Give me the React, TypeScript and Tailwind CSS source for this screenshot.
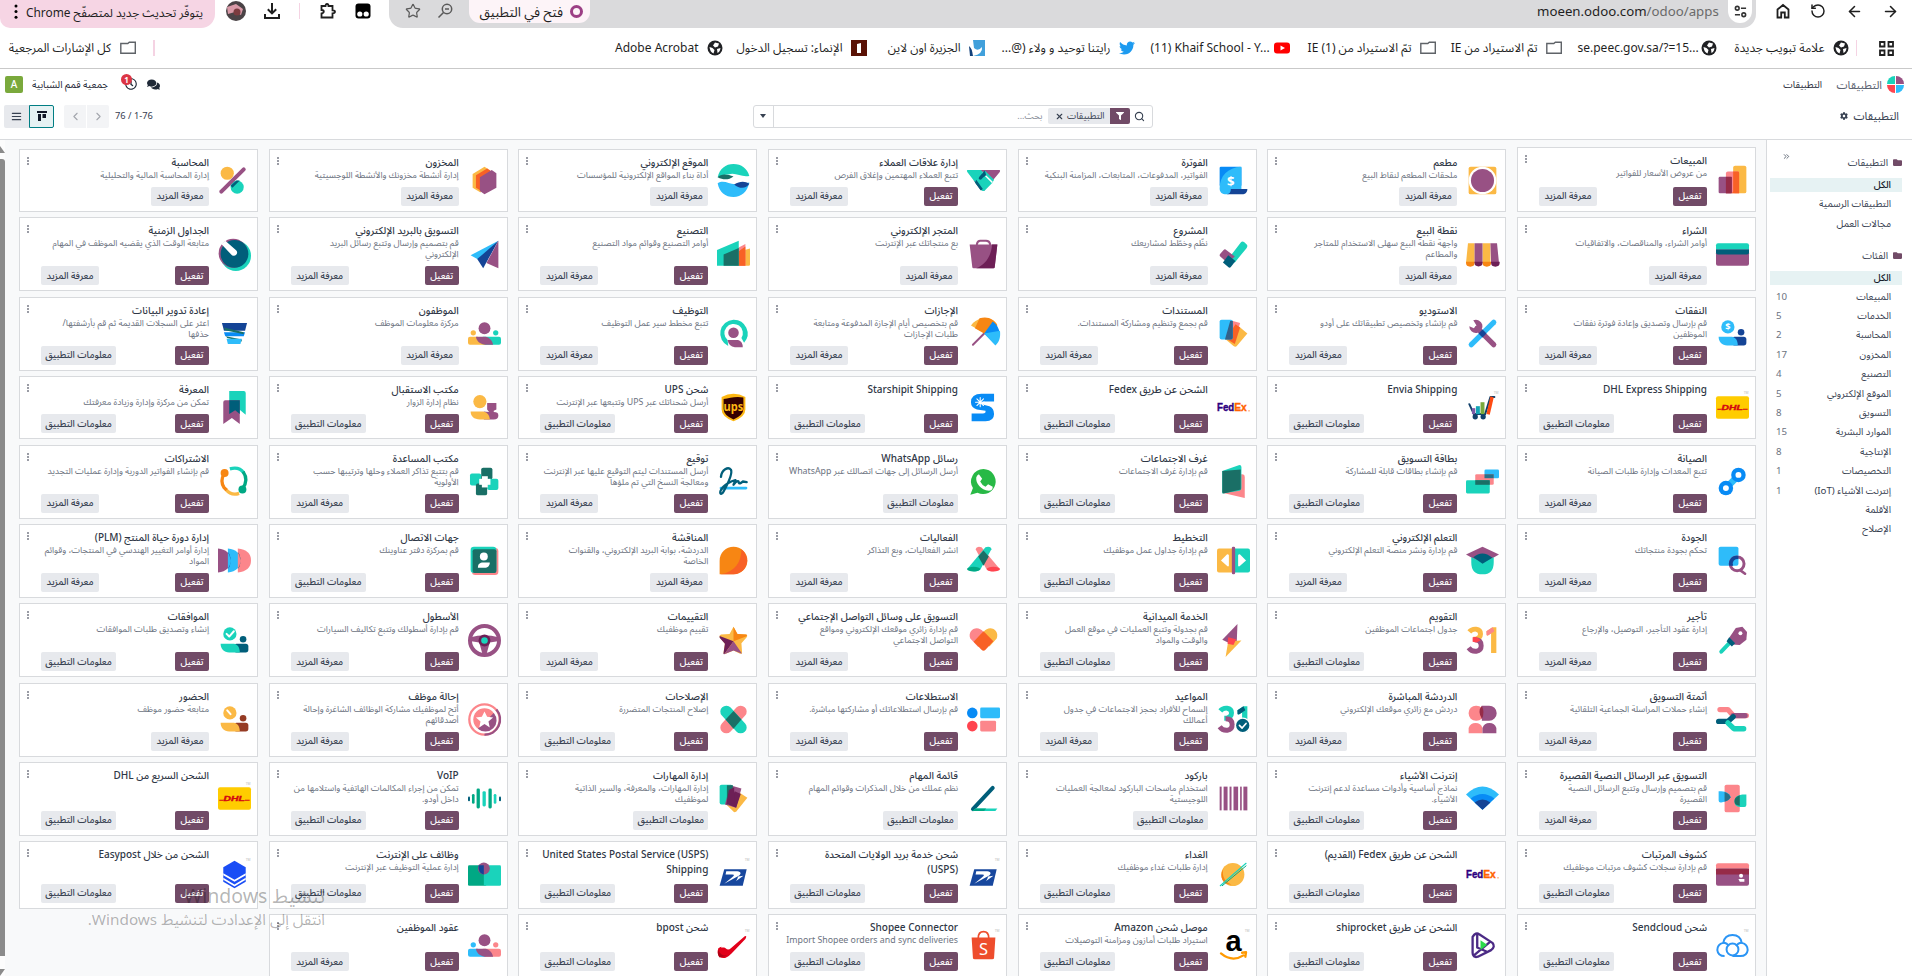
import type { ReactNode } from "react";
import { ArrowLeft, ArrowRight, RotateCcw, Search, Star, X, ChevronLeft, ChevronRight, ChevronsRight, AlignJustify } from "lucide-react";
import { FaComments, FaFilter, FaCog, FaTwitter, FaFolder, FaRegClock } from "react-icons/fa";

const P = "#985184", T = "#1ad3bb", D = "#005e7a", Y = "#fbb945", S = "#fc868b", B = "#2ebcfa", M = "#088bf5", N = "#144496";
const G = "#1a6f66", O = "#f86126", K = "#f78613", W = "#ffffff", V = "#6d1f56", R = "#ff444f", E = "#00a884";

const p = (fill: string, d: string) => <path fill={fill} d={d} />;
const c = (fill: string, cx: number, cy: number, r: number) => <circle fill={fill} cx={cx} cy={cy} r={r} />;
const r = (fill: string, x: number, y: number, w: number, h: number, rx = 0) => <rect fill={fill} x={x} y={y} width={w} height={h} rx={rx} />;
const l = (stroke: string, w: number, d: string) => <path fill="none" stroke={stroke} strokeWidth={w} strokeLinecap="round" strokeLinejoin="round" d={d} />;
const tm = <text x="42" y="4" fontSize="5" fill="#bbb" fontFamily="Noto Sans">TM</text>;

const dhl = <>{tm}{r("#ffcc00", 0, 8, 50, 34, 3)}{p("#d40511", "M2 27h7l-1 1.500H2zM41 27h7v1.500h-8z")}<text x="8.500" y="28.500" fontSize="9.500" fontWeight="900" fontStyle="italic" fill="#d40511" stroke="#d40511" strokeWidth=".5" fontFamily="Liberation Sans" textLength="32" lengthAdjust="spacingAndGlyphs">DHL</text></>;
const fedex = <><text x="0" y="31" fontSize="17" fontWeight="900" fill="#2d0080" fontFamily="Liberation Sans" textLength="26" lengthAdjust="spacingAndGlyphs" stroke="#2d0080" strokeWidth=".6">Fed</text><text x="26" y="31" fontSize="17" fontWeight="900" fill="#ff6200" fontFamily="Liberation Sans" textLength="19" lengthAdjust="spacingAndGlyphs" stroke="#ff6200" strokeWidth=".6">Ex</text>{c("#ff6200", 48.5, 30, 1)}</>;
const usps = <>{tm}{p("#17479e", "M11 17h34l-6 25H4z")}{p(W, "M14 20h14c8 0 10 3 5 7L11 39l12-10c4-3 3-4-1-4H13zM32 28l8-1-11 8 2-4z")}</>;
const people = (a: string, b: string) => <>{c(P, 25, 17, 9)}{c(a, 8, 24, 4)}{c(b, 42, 24, 4)}{r(b, 20, 30, 30, 12, 3)}{p(a, "M3 30h12c2 6 8 10 12 12H3a3 3 0 0 1-3-3v-6a3 3 0 0 1 3-3z")}{p(P, "M12 30h15c7 2 10 7 11 12H26c-8-1-13-5-14-12z")}</>;
const desk = (a: string, b: string, mark: ReactNode) => <>{c(a, 18, 15, 10)}{mark}{c(b, 38, 23, 5)}{r(b, 24, 30, 22, 13, 4)}{p(a, "M4 30h20c6 1 9 6 9 13H17C9 43 4 38 4 30z")}</>;
const thirtyOne = (a: string, b: string, e: string) => <><path fill="none" stroke={a} strokeWidth="7.500" d="M5 12c5-6 17-6 17 3 0 6-5 8-11 8" /><path fill="none" stroke={b} strokeWidth="7.500" d="M13 24c7 0 10 3 10 9 0 10-13 11-19 3" />{p(e, "M31 11l9-6h6v39h-8V14l-6 4z")}</>;

const I: Record<string, ReactNode> = {
  sales: <>{r(Y, 26, 4, 20, 42, 3)}{p(S, "M18 13h15a2 2 0 0 1 2 2v31H15V16a3 3 0 0 1 3-3z")}{r(P, 4, 21, 20, 25, 2)}{r("#962b48", 15, 21, 9, 25)}{p(O, "M26 13h7a2 2 0 0 1 2 2v31H24l2-3z")}</>,
  restaurant: <>{r(Y, 4, 4, 42, 42, 3)}{c(W, 25, 25, 21)}{c(P, 25, 25, 17.5)}</>,
  invoice: <>{r(M, 4, 4, 33, 30, 2)}{p(B, "M37 4v36H22c0 4-4 6-8 6-6 0-10-3-10-9C4 18 16 5 37 4z")}{p(N, "M21 38h25c0 5-3 8-8 8H15c4-1 6-3 6-8z")}<text x="21" y="33" fontSize="20" fontWeight="700" textAnchor="middle" fill={W} fontFamily="Noto Sans">$</text></>,
  crm: <>{p(P, "M20 9h29c2 0 1 3 0 4L39 25zM10 25l10 14 7 2-10-18z")}{p(T, "M1 9h20l18 18-2 3-10 10q-3 2-6-1L1 13C0 11-1 9 1 9zM41 24L27 10l-4 4 15 15z")}{p(D, "M27 10l-8 9q-3 4 1 5 2 0 4-3l5-4zM14 24l10 14-3 2-9-12z")}</>,
  website: <>{p(T, "M1 20C4 7 13 0 25 0s21 7 24 18c-12 3-20-6-32-2-6 0-10 2-16 4z")}{p(G, "M1 20c5-6 15-5 24-1-8 6-16 5-24 1z")}{p(B, "M1 29c11-6 19 4 31 1 6 0 11-1 17-2-3 14-12 22-24 22S3 42 1 29z")}{p(N, "M49 30c-7-5-15-4-23 1 8 7 18 7 23-1z")}</>,
  stock: <>{p(Y, "M7 15L25 4l6 4-12 35L7 36z")}{p(O, "M12 17l17-10 5 3-10 33-12-7z")}{p(P, "M25 46L18 41V20l18-11 7 5v22z")}</>,
  account: <>{c(Y, 14, 14, 10)}{c(T, 29, 35, 10)}{l(P, 6, "M5 42L39 8")}{p("#005e7a", "M19 33l9-8h5l-11 11z")}</>,
  purchase: <>{p(T, "M3 8h44a3 3 0 0 1 3 3v6H0v-6a3 3 0 0 1 3-3z")}{r(P, 0, 20, 50, 22, 3)}{p(D, "M0 17h50v5a3 3 0 0 1-3 3H3a3 3 0 0 1-3-3z")}</>,
  pos: <>{p(Y, "M3 8h10v30H0zM25 8h12v30H25z")}{p(P, "M13 8h12v30H13zM37 8h10l3 30H38z")}{p(K, "M0 36h13v2a6 5 0 0 1-13 0zM25 36h13v2a6 5 0 0 1-13 0z")}{p(V, "M13 36h12v2a6 5 0 0 1-12 0zM38 36h13v2a6 5 0 0 1-13 0z")}</>,
  project: <>{p(T, "M16 33L36 7q2-3 5-1l4 4q2 2 0 5L27 37z")}{p(P, "M5 24l5-6q2-2 4 0l13 10-11 10L5 28q-2-2 0-4z")}{p(D, "M17 26l11 9-7 9q-2 2-4 0l-8-7z")}</>,
  shop: <>{l(P, 3, "M15 14V9q1-5 5-5h9q5 0 6 5v5")}{p(P, "M4 10h42l-4 34q0 2-2 2H10q-2 0-2-2z")}{p(V, "M38 10h8l-4 34q0 2-2 2H14c15-6 23-20 24-36z")}</>,
  mrp: <>{p(Y, "M35 20l15-4v24q0 2-2 2H32z")}{p(S, "M30 16l13-7v33H26z")}{p(T, "M0 18L33 4v38H0z")}{p(O, "M33 20l10-7v29H33z")}{p(G, "M10 25l23-10v27H10z")}</>,
  email: <>{p(B, "M4 26L46 4 18 34z")}{p(N, "M46 4L23 46l-9-14z")}{p(P, "M46 4v42L28 38z")}</>,
  timesheet: <>{c(T, 27, 27, 23)}{c(P, 23, 23, 22)}{c(D, 25, 24, 21)}{p(W, "M5 9l6-5 16 14a5 5 0 1 1-7 7z")}</>,
  expense: desk(B, N, <text x="18" y="20" fontSize="14" fontWeight="700" textAnchor="middle" fill={W} fontFamily="Noto Sans">$</text>),
  studio: <>{l(B, 8, "M42 8L8 42")}{l(P, 8, "M17 17l25 25")}{p(P, "M11 5a10 10 0 1 1-6 9l7 3 4-4z")}{p(N, "M25 19l6 6-6 6-6-6z")}</>,
  documents: <>{p(Y, "M28 10l18 15-16 19q-2 2-5 0L12 33z")}{p(S, "M20 5l15 4-7 24-14-3z")}{p(O, "M28 11l7 5-8 25-13-8z")}{r(B, 4, 4, 20, 30, 3)}{p("#33618a", "M20 6h4v25q0 3-3 3h-9z")}</>,
  timeoff: <>{l(P, 3, "M9 42l17-17")}{p(Y, "M6 13C16-1 37-3 46 12L25 24z")}{p(K, "M19 2c12-4 22 1 27 11L26 25 12 17z")}{p(M, "M26 25L39 7c13 9 13 25 4 35z")}{p(B, "M26 25l24-4c1 10-1 17-7 22z")}</>,
  recruit: <>{p(T, "M25 4a21 21 0 0 0-8 40l-1-9a14 14 0 1 1 21-3l4 7A21 21 0 0 0 25 4z")}{c(P, 25, 24, 8)}{p(P, "M16 35h16q7 2 7 11H27q-9-1-11-11z")}</>,
  employees: people(Y, T),
  recycle: <>{p(N, "M6 9h38l-3 12H9z")}{p(M, "M9 23h32l-2 6H11z")}{p(G, "M9 16l30 7v3l-28-6zM12 29l24 5v3l-22-5z")}{p(B, "M13 33h23l-2 8H15z")}</>,
  dhl, fedex, usps,
  envia: <>{tm}{l("#12406b", 3, "M5 20l7 15h17l8-26h6")}{c("#12406b", 14, 39, 4)}{c("#12406b", 26, 39, 4)}{r("#7b5aa6", 9, 26, 5, 9)}{r("#12a5b5", 15, 23, 6, 12)}{r("#7aa93c", 22, 17, 6, 18)}{p("#ff4b13", "M31 35l6-27 5 2-6 26z")}</>,
  starship: <>{p(M, "M41 4v12H25q-4 1-3 4l12 3q7 3 7 12 0 11-13 11H7V34h17q5 0 4-4l-13-2Q6 25 6 17 6 4 22 4z")}{l(W, 1.6, "M20 10v14M13 17h14M15 12l10 10M25 12L15 22")}</>,
  ups: <>{p("#fdb813", "M7 9q18-10 36 0v19q0 11-18 18Q7 39 7 28z")}{p("#330000", "M10 12c9-1 19-5 30-2v17q0 10-15 16-15-6-15-16z")}<text x="10" y="31" fontSize="19" fontWeight="700" fill="#fdb813" fontFamily="Noto Sans" textLength="30" lengthAdjust="spacingAndGlyphs">ups</text></>,
  frontdesk: <>{c(Y, 18, 16, 10)}{p(P, "M29 18h14v10l-4 2v2q7 0 7 5 0 6-7 6H24V31l8 1-3-4z")}{p(Y, "M4 31h19c7 1 10 7 10 12H18C9 43 4 38 4 31z")}</>,
  knowledge: <>{p(T, "M17 0h22q3 0 3 3v33l-11-9-14 9z")}{p(P, "M11 14h22v36l-12-9-13 9V17q0-3 3-3z")}{p(D, "M17 14h16v21l-7-6-9 6z")}</>,
  maintenance: <>{l(B, 10, "M35 15L15 35")}{c(M, 34, 15, 11)}{c(M, 15, 35, 11)}{c(W, 34, 15, 4.5)}{c(W, 15, 35, 4.5)}</>,
  card: <>{r(B, 28, 7, 22, 13, 2)}{r(S, 14, 14, 28, 16, 2)}{r(T, 0, 23, 36, 20, 2)}{r("#28708a", 28, 14, 14, 6)}{r(G, 14, 23, 22, 7)}</>,
  rooms: <>{p(S, "M17 14h21q4 0 4 4v32L8 42z")}{p(T, "M8 9L34 0q3 0 3 3v32q0 3-3 4L8 43z")}{p(G, "M8 9l28-2v30L10 43q-2 0-2-3z")}</>,
  whatsapp: <>{p("#28b946", "M25 6a19 19 0 1 1-9 36L5 45l4-10A19 19 0 0 1 25 6z")}{p(W, "M18 14l5 7-3 4q3 6 8 8l4-4 7 4q0 6-6 6C21 38 13 28 14 19q1-4 4-5z")}</>,
  sign: <>{r(B, 4, 33, 42, 4, 2)}{l(D, 3.5, "M6 18C7 7 17 2 21 7c3 5-5 22-11 33-3 6-7 4-4-2 4-9 17-14 22-15l-3 7c4-5 8-8 8-3 1 2 4 0 6-2l6 1")}</>,
  helpdesk: <>{r(G, 20, 4, 17, 18, 3)}{r(T, 3, 13, 17, 18, 3)}{r(T, 29, 21, 17, 17, 3)}{r(G, 12, 28, 17, 18, 3)}{r(G, 20, 17, 10, 16)}{r(W, 21, 17, 9, 17)}{r(W, 17, 21, 17, 9)}</>,
  subscription: <><g fill="none" strokeWidth="5"><path stroke={T} d="M18 6q14-4 21 6" /><path stroke={E} d="M38 10q9 13-1 26" /><path stroke={Y} d="M12 37q8 10 20 6" /><path stroke={K} d="M9 14q-6 10 0 20l4 4" /></g>{c(K, 10, 12, 6)}{c(E, 37, 37, 6)}</>,
  quality: <>{r(B, 4, 4, 30, 29, 3)}<circle cx="32" cy="30" r="10.500" fill="none" stroke={P} strokeWidth="4.500" />{l(P, 4, "M37 40l7 5")}{p(N, "M20 33a12 12 0 0 1 14-15v5a7 7 0 0 0-8 10z")}</>,
  elearning: <>{p(P, "M25 4l25 12-25 14L0 16z")}{p(T, "M8 20q17 10 34 0v8q0 18-17 18T8 28z")}{p(D, "M11 20q14-12 29 1L25 30z")}</>,
  planning: <>{r(Y, 0, 7, 26, 36, 3)}{r(T, 24, 7, 26, 36, 3)}{r(P, 22.5, 4, 5, 42, 2)}{p(W, "M18 17v16q-1 2-3 0l-9-8 9-9q2-1 3 1zM32 17v16q1 2 3 0l9-8-9-9q-2-1-3 1z")}</>,
  events: <>{p(S, "M13 8q1-4 5-4l4 1 27 32q-11 8-19 2z")}{p(T, "M37 8q0-4-5-4l-4 1L1 37q10 8 19 2z")}{p(G, "M25 10l8 9-8 14-8-14z")}<ellipse cx="10" cy="38" rx="10" ry="3.500" fill={E} /><ellipse cx="40" cy="38" rx="10" ry="3.500" fill={R} /></>,
  discuss: <>{p(K, "M4 46V25a21 21 0 1 1 21 21z")}{p(O, "M37 8c0 19-10 35-32 38h20A21 21 0 0 0 37 8z")}</>,
  contacts: <>{r(S, 6, 6, 40, 41, 5)}{r(T, 4, 4, 39, 40, 5)}{r(G, 7, 8, 36, 36, 3)}{c(W, 24, 19, 6)}{p(W, "M15 36c0-6 3-8 8-8h10c0 5-3 8-8 8z")}</>,
  plm: <>{p(P, "M0 7q19 2 19 18T0 43z")}{p(B, "M15 7q19 2 19 18T15 43z")}{p(S, "M30 7q20 2 20 18T30 43z")}{p(N, "M15 12q8 13 0 26 4-4 4-13t-4-13z")}{p(D, "M30 12q8 13 0 26 4-4 4-13t-4-13z")}</>,
  rental: <>{l(T, 6, "M8 42l18-19")}{p(P, "M30 6l10-2 7 8-1 12-10 8-12-1-4-10z")}{p(D, "M20 20l9 9-5 5-8-8z")}{c(W, 37, 14, 3)}</>,
  calendar: <>{thirtyOne(Y, P, Y)}{p(R, "M10 20q8-2 12 5l-6 3-6-1z")}{p(S, "M31 11l9-6 3 6-9 6-3 0z")}</>,
  field: <>{p(P, "M31 0L8 24l15 7 7-5z")}{p(Y, "M13 50l4-24 20-1z")}{p(R, "M17 20l12 3-4 9-9-2z")}</>,
  social: <>{p(S, "M25 12C16 0 0 9 5 22l12 13 15-15z")}{p(Y, "M25 12c9-12 25-3 20 10L34 34 18 18z")}{p(O, "M25 11l15 15-12 13q-3 3-6 0L10 27z")}</>,
  appraisal: <>{p(Y, "M25 4l6 11 13 1q3 1 1 4l-8 9 1 14q0 3-3 2l-10-5-12 5q-3 1-3-2l2-13-8-10q-1-3 2-4l13-1z")}{p(K, "M25 4l6 11 13 1q3 1 0 3L25 26z")}{p(V, "M4 18l21 8-14 20q-2 0-1-3l2-13-8-9z")}{p(P, "M25 26l13 19-13-5-14 6z")}</>,
  fleet: <><circle cx="25" cy="25" r="22" fill="none" stroke={P} strokeWidth="6" />{p(P, "M4 20q21-6 42 0l-1 6-12 2-5 18h-6l-5-18-12-2z")}{c(V, 25, 25, 9)}{c(T, 25, 25, 5)}</>,
  approvals: desk(T, D, l(W, 3, "M13 15l4 4 7-8")),
  automation: <>{l(S, 8, "M6 10h12l8 9h20")}{l(P, 8, "M26 19h18")}{l(D, 8, "M4 28h14l8-7")}{l(T, 8, "M18 30l9 9h15")}</>,
  livechat: <>{r(S, 4, 4, 23, 23, 11)}{p(P, "M24 4h11a11 11 0 0 1 0 23H24z")}{p("#962b48", "M24 4q-7 8 0 20 5-10 0-20z")}{p(S, "M4 46V38a11 11 0 0 1 21 0v8z")}{p(P, "M25 46v-8a11 11 0 0 1 21 0v8z")}</>,
  appointment: <>{thirtyOne(T, P, T)}{p(D, "M31 11l9-6 3 6-9 6-3 0z")}{c(W, 39, 34, 12)}{c(D, 39, 34, 10)}{l(W, 2.5, "M34 34l4 4 6-7")}</>,
  survey: <>{c(M, 8, 15, 8)}{r(B, 20, 7, 30, 16, 2)}{c(R, 8, 35, 8)}{r(S, 20, 27, 24, 16, 2)}</>,
  repair: <>{l(S, 18, "M36 13L14 37")}{l(T, 18, "M14 13l22 24")}{p(G, "M25 12l12 13-12 14-12-14z")}</>,
  referral: <><circle cx="25" cy="25" r="23" fill="none" stroke={S} strokeWidth="3.500" /><path d="M25 48A23 23 0 0 0 43 10" fill="none" stroke={P} strokeWidth="3.500" />{c(S, 25, 25, 17)}{p(P, "M39 15a17 17 0 0 1-24 24z")}{p(W, "M25 13l4 8 9 1-7 6 2 9-8-5-8 5 2-9-7-6 9-1z")}</>,
  attendance: desk(Y, "#953b24", l(W, 3, "M14 11l5 6")),
  sms: <>{r(S, 13, 4, 23, 42, 3)}{p(B, "M4 14h4q12 1 14 8-1 7-14 9H7q-3 0-3-3z")}{p(T, "M46 19h-6q-12 1-12 10 0 8 8 9h7q3 0 3-3z")}{p("#28708a", "M13 15q8 3 9 8-2 5-9 7z")}{p(G, "M36 20q-9 3-8 10 0 5 8 6z")}</>,
  iot: <>{p(B, "M0 19Q25-5 50 19L25 42z")}{p(M, "M7 25q18-14 36 0L25 42z")}{p(N, "M13 31q12-9 24 0L25 42z")}</>,
  barcode: <>{r(P, 4, 7, 3, 36)}{r(P, 10, 7, 6, 36)}{r(P, 19, 7, 3, 36)}{r(P, 25, 7, 7, 36)}{r(P, 35, 7, 2.5, 36)}{r(P, 40, 7, 6, 36)}</>,
  todo: <>{l(D, 6, "M39 9L9 41")}{p(T, "M13 40h33l-3 4H8z")}{p(E, "M13 40h16l-3 4H8z")}</>,
  skills: <>{p(Y, "M28 12l18 12-17 21-3 1-12-12z")}{r(T, 4, 4, 20, 30, 3)}{p(P, "M20 5l17 5-8 29-17-5z")}{p(V, "M27 14l9 4-7 21-12-5z")}{p(G, "M15 5h9v26l-9 3z")}{p(V, "M18 12l8-4v24l-12 2z")}</>,
  voip: <>{r(D, 0, 22, 3, 7, 1.5)}{r(E, 6, 18, 4, 15, 2)}{r(E, 13, 10, 5, 30, 2)}{r(T, 22, 14, 5, 23, 2)}{r(E, 31, 10, 5, 30, 2)}{r(T, 39, 18, 4, 15, 2)}{r(D, 47, 22, 3, 7, 1.5)}</>,
  payroll: <>{r(P, 0, 16, 50, 26, 3)}{p(S, "M3 8h44a3 3 0 0 1 3 3v5H0v-5a3 3 0 0 1 3-3z")}{r("#962b48", 0, 16, 50, 9)}{c(W, 38, 27, 3)}{p(W, "M34 32h9v4h-7z")}</>,
  lunch: <>{c(Y, 24, 25, 17.5)}{p(K, "M12 12C5 22 10 36 22 40 12 42 5 33 7 22z")}{l(T, 1.8, "M5 42L44 8")}{l(E, 1.5, "M8 42L44 12")}</>,
  webjobs: <>{r(E, 0, 11, 28, 31, 2)}{r(T, 24, 11, 26, 31, 2)}{c(P, 24, 16, 9)}{p(N, "M16 11h8v14q-9-2-8-14z")}</>,
  easypost: <>{tm}{p("#1a4df5", "M25 4l17 10v22L25 46 8 36V14z")}{p(W, "M8 23l17 10 17-10v3L25 36 8 26zM8 30l17 10 17-10v3L25 43 8 33z")}</>,
  sendcloud: <>{tm}<g fill="none" stroke={"#2b95f5"} strokeWidth="3"><path d="M13 41q-10 0-11-9 0-9 9-11Q13 9 25 9t14 12q9 2 9 11-1 9-11 9H25" /><circle cx="25" cy="31" r="9" /><path d="M11 21q6 0 8 5M39 21q-6 0-8 5" /></g></>,
  shiprocket: <>{l("#4b2a85", 3.5, "M10 12v24q0 8 8 6l20-10q7-5 2-11L20 8q-5-4-10 4M17 8v20l14 6M12 40l24-20")}{p("#2bdc4a", "M22 17l10 7-10 8z")}</>,
  amazon: <>{tm}<text x="25" y="34" fontSize="44" fontWeight="700" textAnchor="middle" fill="#000" fontFamily="Liberation Sans">a</text>{l("#ff9900", 3.5, "M6 37q17 14 34 3M38 36l6-1-1 7")}</>,
  shopee: <>{tm}{p("#ee4d2d", "M7 13h36l-2 31q0 2-3 2H12q-3 0-3-2z")}{l("#ee4d2d", 2.5, "M17 14q0-10 8-10t8 10")}<text x="25" y="39" fontSize="25" textAnchor="middle" fill={W} fontFamily="Noto Sans">S</text></>,
  bpost: <>{tm}{p("#e2001a", "M2 29q7-4 11 0 4 4 8 0L42 11q4-2 1 4L22 37Q11 48 4 42-1 38 2 29z")}{p("#b00014", "M2 32q4 10 14 8L4 43q-4-3-2-11z")}{p(W, "M6 28q7-12 20-14-8 5-12 14z")}</>,
  contracts: people(B, S),
};

type App = [icon: string, title: string, desc: string, buttons: "am" | "ai" | "m" | "i"];

const apps: App[] = [
  ["sales", "المبيعات", "من عروض الأسعار للفواتير", "am"],
  ["restaurant", "مطعم", "ملحقات المطعم لنقاط البيع", "m"],
  ["invoice", "الفوترة", "الفواتير، المدفوعات، المتابعات، المزامنة البنكية", "m"],
  ["crm", "إدارة علاقات العملاء", "تتبع العملاء المهتمين وإغلاق الفرص", "am"],
  ["website", "الموقع الإلكتروني", "أداة بناء المواقع الإلكترونية للمؤسسات", "m"],
  ["stock", "المخزون", "إدارة أنشطة مخزونك والأنشطة اللوجسيتية", "m"],
  ["account", "المحاسبة", "إدارة المحاسبة المالية والتحليلية", "m"],
  ["purchase", "الشراء", "أوامر الشراء، والمناقصات، والاتفاقيات", "m"],
  ["pos", "نقطة البيع", "واجهة نقطة البيع سهلى الاستخدام للمتاجر\nوالمطاعم", "m"],
  ["project", "المشروع", "نظّم وخطّط لمشاريعك", "m"],
  ["shop", "المتجر الإلكتروني", "بع منتجاتك عبر الإنترنت", "m"],
  ["mrp", "التصنيع", "أوامر التصنيع وقوائم مواد التصنيع", "am"],
  ["email", "التسويق بالبريد الإلكتروني", "قم بتصميم وإرسال وتتبع رسائل البريد\nالإلكتروني", "am"],
  ["timesheet", "الجداول الزمنية", "متابعة الوقت الذي يقضيه الموظف في المهام", "am"],
  ["expense", "النفقات", "قم بإرسال وتصديق وإعادة فوترة نفقات\nالموظفين", "am"],
  ["studio", "الاستوديو", "قم بإنشاء وتخصيص تطبيقاتك على أودو", "am"],
  ["documents", "المستندات", "قم بجمع وتنظيم ومشاركة المستندات.", "am"],
  ["timeoff", "الإجازات", "قم بتخصيص أيام الإجازة المدفوعة ومتابعة\nطلبات الإجازات", "am"],
  ["recruit", "التوظيف", "تتبع مخطط سير عمل التوظيف", "am"],
  ["employees", "الموظفون", "مركزة معلومات الموظف", "m"],
  ["recycle", "إعادة تدوير البيانات", "اعثر على السجلات القديمة ثم قم بأرشفتها/\nحذفها", "ai"],
  ["dhl", "DHL Express Shipping", "", "ai"],
  ["envia", "Envia Shipping", "", "ai"],
  ["fedex", "الشحن عن طريق Fedex", "", "ai"],
  ["starship", "Starshipit Shipping", "", "ai"],
  ["ups", "شحن UPS", "أرسل شحناتك عبر UPS وتتبعها عبر الإنترنت", "ai"],
  ["frontdesk", "مكتب الاستقبال", "نظام إدارة الزوار", "ai"],
  ["knowledge", "المعرفة", "تمكن من مركزة وإدارة وزيادة معرفتك", "ai"],
  ["maintenance", "الصيانة", "تتبع المعدات وإدارة طلبات الصيانة", "am"],
  ["card", "بطاقة التسويق", "قم بإنشاء بطاقات قابلة للمشاركة", "ai"],
  ["rooms", "غرف الاجتماعات", "قم بإدارة غرف الاجتماعات", "ai"],
  ["whatsapp", "رسائل WhatsApp", "أرسل الرسائل إلى جهات اتصالك عبر WhatsApp", "i"],
  ["sign", "توقيع", "أرسل المستندات ليتم التوقيع عليها عبر الإنترنت\nومعالجة النسخ التي تم ملؤها", "am"],
  ["helpdesk", "مكتب المساعدة", "قم بتتبع تذاكر العملاء وحلها وترتيبها حسب\nالأولوية", "am"],
  ["subscription", "الاشتراكات", "قم بإنشاء الفواتير الدورية وإدارة عمليات التجديد", "am"],
  ["quality", "الجودة", "تحكم بجودة منتجاتك", "am"],
  ["elearning", "التعلم الإلكتروني", "قم بإدارة ونشر منصة التعلم الإلكتروني", "am"],
  ["planning", "التخطيط", "قم بإدارة جداول عمل موظفيك", "ai"],
  ["events", "الفعاليات", "انشر الفعاليات، وبع التذاكر", "am"],
  ["discuss", "المناقشة", "الدردشة، بوابة البريد الإلكتروني، والقنوات\nالخاصة", "m"],
  ["contacts", "جهات الاتصال", "قم بمركزة دفتر عناوينك", "ai"],
  ["plm", "إدارة دورة حياة المنتج (PLM)", "إدارة أوامر التغيير الهندسي في المنتجات، وقوائم\nالمواد", "am"],
  ["rental", "تأجير", "إدارة عقود التأجير، التوصيل، والإرجاع", "am"],
  ["calendar", "التقويم", "جدول اجتماعات الموظفين", "ai"],
  ["field", "الخدمة الميدانية", "قم بجدولة وتتبع العمليات في موقع العمل\nوالوقت والمواد", "ai"],
  ["social", "التسويق على وسائل التواصل الإجتماعي", "قم بإدارة زائري موقعك الإلكتروني ومواقع\nالتواصل الاجتماعي", "am"],
  ["appraisal", "التقييمات", "تقييم موظفيك", "am"],
  ["fleet", "الأسطول", "قم بإدارة أسطولك وتتبع تكاليف السيارات", "am"],
  ["approvals", "الموافقات", "إنشاء وتصديق طلبات الموافقات", "ai"],
  ["automation", "أتمتة التسويق", "إنشاء حملات المراسلة الجماعية التلقائية", "am"],
  ["livechat", "الدردشة المباشرة", "دردش مع زائري موقعك الإلكتروني", "am"],
  ["appointment", "المواعيد", "إلسماح للأفراد بحجز الاجتماعات في جدول\nأعمالك", "am"],
  ["survey", "الاستطلاعات", "قم بإرسال استطلاعاتك أو مشاركتها مباشرة.", "am"],
  ["repair", "الإصلاحات", "إصلاح المنتجات المتضررة", "ai"],
  ["referral", "إحالة موظف", "أتح لموظفيك مشاركة الوظائف الشاغرة وإحالة\nأصدقائهم", "am"],
  ["attendance", "الحضور", "متابعة حضور موظف", "m"],
  ["sms", "التسويق عبر الرسائل النصية القصيرة", "قم بتصميم وإرسال وتتبع الرسائل النصية\nالقصيرة", "am"],
  ["iot", "إنترنت الأشياء", "نماذج أساسية وأدوات مساعدة لدعم إنترنت\nالأشياء.", "ai"],
  ["barcode", "باركود", "استخدام ماسحات الباركود لمعالجة العمليات\nاللوجيستية", "i"],
  ["todo", "قائمة المهام", "نظم عملك من خلال المذكرات وقوائم المهام", "i"],
  ["skills", "إدارة المهارات", "إدارة المهارات، والمعرفة، والسير الذاتية\nلموظفيك", "i"],
  ["voip", "VoIP", "تمكن من إجراء المكالمات الهاتفية واستلامها من\nداخل أودو.", "ai"],
  ["dhl", "الشحن السريع من DHL", "", "ai"],
  ["payroll", "كشوف المرتبات", "قم بإدارة سجلات كشوف مرتبات موظفيك", "ai"],
  ["fedex", "الشحن عن طريق Fedex (القديم)", "", "ai"],
  ["lunch", "الغداء", "إدارة طلبات غداء موظفيك", "ai"],
  ["usps", "شحن خدمة بريد الولايات المتحدة\n(USPS)", "", "ai"],
  ["usps", "United States Postal Service (USPS)\nShipping", "", "ai"],
  ["webjobs", "وظائف على الإنترنت", "إدارة عملية التوظيف عبر الإنترنت", "ai"],
  ["easypost", "الشحن من خلال Easypost", "", "ai"],
  ["sendcloud", "شحن Sendcloud", "", "ai"],
  ["shiprocket", "الشحن عن طريق shiprocket", "", "ai"],
  ["amazon", "موصل شحن Amazon", "استيراد طلبات أمازون ومزامنة التوصيلات", "ai"],
  ["shopee", "Shopee Connector", "Import Shopee orders and sync deliveries", "ai"],
  ["bpost", "شحن bpost", "", "ai"],
  ["contracts", "عقود الموظفين", "", "am"],
];

function AppCard({ app: [icon, title, desc, buttons], first }: { app: App; first: boolean }) {
  const secondary = "flex h-[19px] items-center justify-center rounded-[2px] bg-[#e7e9ed] text-[9.3px] font-medium text-[#374151]";
  return (
    <article className={`flex min-h-0 overflow-hidden border border-[#d8dadd] bg-white pr-[6px] ${first ? "-mt-[2px]" : ""}`}>
      <svg viewBox="0 0 50 50" className="h-[33px] w-[33px] shrink-0 self-center overflow-visible [direction:ltr]">{I[icon]}</svg>
      <div className="mr-[9px] flex min-w-0 flex-1 flex-col pt-[5px] pb-[5px]">
        <h3 className="text-[10px] leading-[15px] font-medium whitespace-pre text-[#2f3746]">{title}</h3>
        <p className="text-[8.8px] leading-[11px] whitespace-pre text-[#6b7280]">{desc}</p>
        <div className="mt-auto flex justify-between">
          {buttons[0] === "a" && (
            <button className="flex h-[19px] w-[34px] items-center justify-center rounded-[2px] bg-[#714b67] text-[9.3px] font-medium text-white">تفعيل</button>
          )}
          {buttons.endsWith("m") ? (
            <button className={`${secondary} w-[58px]`}>معرفة المزيد</button>
          ) : (
            <button className={`${secondary} w-[75px]`}>معلومات التطبيق</button>
          )}
        </div>
      </div>
      <div className="flex w-[21px] shrink-0 justify-end pt-[7px] pl-[7px]">
        <svg viewBox="0 0 3 8" className="h-[8px] w-[3px]" fill="#9a9ca5"><path d="M0 0h2v2H0zM0 3h2v2H0zM0 6h2v2H0z" /></svg>
      </div>
    </article>
  );
}

const Globe = () => (
  <svg viewBox="0 0 16 16" className="h-4 w-4"><circle cx="8" cy="8" r="7.500" fill="#202124" /><path d="M8 2.500l4 1-1 3-3 1-2-2zM2.500 7l3 1 2 2-1 3.500Q3 12 2.500 7zM10 9l3.500-1q-.5 4-3 5z" fill="#fff" /></svg>
);
const Folder = () => (
  <svg viewBox="0 0 16 16" className="h-4 w-4" fill="none" stroke="#5f6368" strokeWidth="1.400"><path d="M.8 13.200V3.500h7l1.500-1.300h6v11z" /></svg>
);
const YouTube = () => (
  <svg viewBox="0 0 16 16" className="h-4 w-4"><rect y="2.500" width="16" height="11" rx="3" fill="#f00" /><path d="M6.500 5.500v5L11 8z" fill="#fff" /></svg>
);
const Jazira = () => (
  <svg viewBox="0 0 16 16" className="h-4 w-4"><path d="M4 0h12v16H4q10-2 9-9-4 5-8 1z" fill="#41a0db" /><path d="M0 6q3 2 4 10H1z" fill="#12407a" /></svg>
);
const Inma = () => (
  <svg viewBox="0 0 16 16" className="h-4 w-4"><path fill="#5a1205" d="M0 0h16v16H0z" /><path fill="#fff" d="M6 4l4-1v10H6z" /></svg>
);

const bookmarks: [ReactNode, string, string][] = [
  [<Globe />, "علامة تبويب جديدة", "w-[92px]"],
  [<Globe />, "se.peec.gov.sa/?=15...", "w-[115px]"],
  [<Folder />, "تمّ الاستيراد من IE", "w-[86px]"],
  [<Folder />, "تمّ الاستيراد من IE (1)", "w-[106px]"],
  [<YouTube />, "(11) Khaif School - Y...", "w-[115px]"],
  [<FaTwitter size={16} color="#1d9bf0" />, "رايتنا توحيد و ولاء (@...", "w-[110px]"],
  [<Jazira />, "الجزيرة اون لاين", "w-[78px]"],
  [<Inma />, "الإنماء: تسجيل الدخول", "w-[104px]"],
  [<Globe />, "Adobe Acrobat", "w-[80px]"],
];

function BrowserBar() {
  return (
    <div className="h-[69px] border-b border-[#c9c9c9] text-[#1f1f1f]">
      <div className="flex h-[28px] items-start">
        <div className="flex h-[22px] w-[156px] items-center justify-between pr-[13px] pl-[19px]">
          <ArrowRight size={17} strokeWidth={2.2} />
          <ArrowLeft size={17} strokeWidth={2.2} />
          <RotateCcw size={16} strokeWidth={2.2} />
          <svg viewBox="0 0 16 16" className="h-4 w-4" fill="none" stroke="currentColor" strokeWidth="1.800"><path d="M2.500 14.500v-8L8 2l5.500 4.500v8h-3.700V9.500H6.200v5z" /></svg>
        </div>
        <div className="flex h-[28px] w-[1367px] shrink-0 items-start rounded-b-[14px] bg-[#dadadc] pr-[4px]">
          <div className="flex h-[23px] w-[24px] items-center justify-center rounded-b-full bg-white">
            <svg viewBox="0 0 14 14" className="h-[13px] w-[13px]" fill="none" stroke="#333" strokeWidth="1.700"><circle cx="3.500" cy="3.500" r="2" /><path d="M7.500 3.500H13M1 10.500h5.500" /><circle cx="10.500" cy="10.500" r="2" /></svg>
          </div>
          <div dir="ltr" className="mr-[10px] w-[181px] text-[13.250px] leading-[23px] whitespace-nowrap">moeen.odoo.com<span className="text-[#6a6a6a]">/odoo/apps</span></div>
          <div className="mr-auto flex h-[23px] w-[121px] items-center rounded-b-[11px] bg-[#fdf4f8] pr-[7px] whitespace-nowrap">
            <span className="h-[13px] w-[13px] rounded-full border-[3px] border-[#9c3f85]" />
            <span className="mr-[7px] text-[13.300px] leading-[20px]">فتح في التطبيق</span>
          </div>
          <div className="flex h-[22px] w-[80px] items-center justify-between pr-[16px] pl-[16px] text-[#5a5a5a]">
            <svg viewBox="0 0 16 16" className="h-4 w-4" fill="none" stroke="currentColor" strokeWidth="1.500"><circle cx="10" cy="6" r="4.700" /><path d="M6.500 9.500L1.500 14.500M8 6h4" /></svg>
            <Star size={16} strokeWidth={1.800} />
          </div>
        </div>
        <div className="flex h-[22px] flex-1 items-center">
          <svg viewBox="0 0 16 16" className="mr-[18px] h-4 w-4 shrink-0"><rect x=".5" y=".5" width="15" height="15" rx="3" fill="#000" /><circle cx="4.800" cy="11" r="2.600" fill="#fff" /><circle cx="11.200" cy="11" r="2.600" fill="#fff" /></svg>
          <svg viewBox="0 0 16 16" className="mr-[19px] h-4 w-4 shrink-0" fill="none" stroke="currentColor" strokeWidth="1.800"><path d="M1.500 3h4q0-2 1.500-2t1.500 2h4v4.300q2.500 0 2.500 1.500t-2.500 1.500v4.200h-11v-4q2.300-.5 2.300-2T1.500 7z" /></svg>
          <span className="mr-[20px] h-4 w-[1.500px] bg-[#f5d3e3]" />
          <svg viewBox="0 0 16 16" className="mr-[19px] h-4 w-4 shrink-0" fill="none" stroke="currentColor" strokeWidth="2"><path d="M8 0v10M3.800 6.200L8 10.400l4.200-4.200M1 11v4h14v-4" /></svg>
          <svg viewBox="0 0 20 20" className="mr-[18px] h-5 w-5 shrink-0"><circle cx="10" cy="10" r="10" fill="#4a4346" /><path d="M1 6l9-3 7 5-2 6-6-3-7 2z" fill="#d99aa8" /><circle cx="11" cy="11" r="3.500" fill="#7b3b3f" /></svg>
          <div className="mr-auto flex h-[28px] w-[215px] shrink-0 items-center self-start rounded-br-[14px] rounded-bl-[10px] bg-[#f6d5e4] pr-[12px] pb-[5px] whitespace-nowrap">
            <span className="w-[176px] text-[11.900px] leading-[20px]">يتوفّر تحديث جديد لمتصفّح Chrome</span>
            <svg viewBox="0 0 4 16" className="mr-[9px] h-[15px] w-1"><circle cx="2" cy="2" r="1.600" /><circle cx="2" cy="8" r="1.600" /><circle cx="2" cy="14" r="1.600" /></svg>
          </div>
        </div>
      </div>
      <div className="flex h-[40px] items-center pr-[18px] pl-[8px] text-[12px] leading-[20px]">
        <svg viewBox="0 0 15 15" className="h-[15px] w-[15px]" fill="none" stroke="currentColor" strokeWidth="1.800"><path d="M1 1h4.500v4.500H1zM9.500 1H14v4.500H9.500zM1 9.500h4.500V14H1zM9.500 9.500H14V14H9.500z" /></svg>
        <span className="mr-[22px] ml-[7px] h-4 w-[1.500px] bg-[#f5d3e3]" />
        <div className="flex gap-[16px]">
          {bookmarks.map(([icon, label, w]) => (
            <div key={label} className="flex items-center gap-[8px]">
              {icon}
              <span dir={label.startsWith("(11)") || label.startsWith("se.") ? "ltr" : "rtl"} className={`whitespace-nowrap ${w}`}>{label}</span>
            </div>
          ))}
        </div>
        <span className="mr-auto ml-[17px] h-4 w-[1.500px] bg-[#f5d3e3]" />
        <Folder />
        <span className="mr-[9px] w-[103px] whitespace-nowrap">كل الإشارات المرجعية</span>
      </div>
    </div>
  );
}

function Header() {
  return (
    <div className="h-[71px] border-b border-[#d8dadd] bg-white text-[#374151]">
      <div className="flex h-[31px] items-center pr-[8px] pl-[5px]">
        <svg viewBox="0 0 18 18" className="h-[17px] w-[17px]"><path fill="#1ad3bb" d="M8.500 8.500H0A8.500 8.500 0 0 1 8.500 0z" /><path fill="#985184" d="M9.500 8.500V0A8.500 8.500 0 0 1 18 8.500z" /><path fill="#ff444f" d="M8.500 9.500V18A8.500 8.500 0 0 1 0 9.500z" /><path fill="#2ebcfa" d="M9.500 9.500H18A8.500 8.500 0 0 1 9.500 18z" /></svg>
        <span className="mr-[5px] w-[45px] text-[11.200px] leading-[16px] whitespace-nowrap text-[#5b6270]">التطبيقات</span>
        <span className="mr-[15px] text-[9.500px] leading-[16px] text-[#1f2937]">التطبيقات</span>
        <FaComments size={13} className="mr-auto ml-[13px] text-[#1f2937]" />
        <div className="relative -mr-[3px] h-[13px] w-[12px]">
          <FaRegClock size={12} className="text-[#1f2937]" />
          <span className="absolute -top-[4px] right-[5px] flex h-[11px] w-[11px] items-center justify-center rounded-full bg-[#dc3545] text-[8px] leading-none font-bold text-white">1</span>
        </div>
        <span className="mr-[17px] ml-[9px] text-[9.800px] leading-[16px] whitespace-nowrap text-[#1f2937]">جمعية قمم الشبابية</span>
        <span className="flex h-[17px] w-[18px] items-center justify-center rounded-[2px] bg-[#7aa93c] text-[10px] font-medium text-white">A</span>
      </div>
      <div className="flex h-[32px] items-center justify-between pr-[13px] pl-[4px]">
        <div className="flex w-[400px] items-center gap-[5px]">
          <span className="text-[11.200px] leading-[16px]">التطبيقات</span>
          <FaCog size={8} />
        </div>
        <div className="mr-[10px] flex h-[23px] w-[400px] items-center rounded-[3px] border border-[#d8dadd]">
          <Search size={11} strokeWidth={2.400} className="mr-[7px] ml-[4px]" />
          <span className="flex h-[16px] w-[20px] items-center justify-center rounded-r-[2px] bg-[#714b67] text-white"><FaFilter size={8} /></span>
          <span className="flex h-[16px] w-[62px] items-center justify-between rounded-l-[2px] bg-[#e7e9ed] pr-[5px] pl-[7px]">
            <span className="text-[9.200px] leading-[14px]">التطبيقات</span>
            <X size={9} strokeWidth={3} />
          </span>
          <span className="mr-[5px] text-[9px] leading-[14px] text-[#8a8f9a]">بحث...</span>
          <span className="mr-auto flex h-full w-[20px] items-center justify-center border-r border-[#d8dadd]">
            <svg viewBox="0 0 6 4" className="h-[4px] w-[6px]"><path d="M0 0h6L3 4z" fill="#374151" /></svg>
          </span>
        </div>
        <div className="flex w-[412px] items-center justify-end">
          <span dir="ltr" className="ml-[6px] text-[9.300px] leading-[14px]">76 / 1-76</span>
          <div className="ml-[10px] flex gap-px text-[#a3a6ad]">
            <span className="flex h-[23px] w-[22px] items-center justify-center rounded-r-[2px] bg-[#f3f4f6]"><ChevronRight size={13} /></span>
            <span className="flex h-[23px] w-[22px] items-center justify-center rounded-l-[2px] bg-[#f3f4f6]"><ChevronLeft size={13} /></span>
          </div>
          <span className="flex h-[23px] w-[25px] items-center justify-center rounded-r-[2px] border border-[#017e84] bg-[#e6f2f3]">
            <svg viewBox="0 0 10 10" className="h-[10px] w-[10px]" fill="#111827"><path d="M0 0h10v2H0zM1 3h3v7H1zM5.500 3H9v4H5.500z" /></svg>
          </span>
          <span className="flex h-[23px] w-[25px] items-center justify-center rounded-l-[2px] bg-[#e7e9ed]"><AlignJustify size={11} strokeWidth={2.600} /></span>
        </div>
      </div>
    </div>
  );
}

const categories: [string, string][] = [
  ["المبيعات", "10"], ["الخدمات", "5"], ["المحاسبة", "2"], ["المخزون", "17"], ["التصنيع", "4"], ["الموقع الإلكتروني", "5"], ["التسويق", "8"],
  ["الموارد البشرية", "15"], ["الإنتاجية", "8"], ["التخصيصات", "1"], ["إنترنت الأشياء (IoT)", "1"], ["الأقلمة", ""], ["الإصلاح", ""],
];

function Sidebar() {
  const row = "flex h-[19.400px] items-center justify-between pr-[11px] pl-[6px]";
  const head = "flex items-center gap-[5px] text-[9.900px] leading-[16px]";
  return (
    <aside className="w-[146px] shrink-0 border-l border-[#d8dadd] bg-white pr-[10px] pl-[3px] text-[9.700px] leading-[14px] text-[#374151]">
      <div className="flex h-[38px] justify-between pt-[13px] pl-[12px]">
        <div className={`${head} h-[18px]`}><FaFolder size={9} color="#714b67" />التطبيقات</div>
        <ChevronsRight size={9} className="-mt-px" strokeWidth={2} />
      </div>
      <div className="flex h-[14px] items-center bg-[#e6f2f3] pr-[11px] font-medium text-[#111827]">الكل</div>
      <div className="flex h-[24px] items-center pr-[11px]">التطبيقات الرسمية</div>
      <div className="flex h-[16px] items-center pr-[11px]">مجالات العمل</div>
      <div className={`${head} mt-[14px] h-[18px]`}><FaFolder size={9} color="#714b67" />الفئات</div>
      <div className="mt-[7px] mb-[2px] flex h-[14px] items-center bg-[#e6f2f3] pr-[11px] font-medium text-[#111827]">الكل</div>
      {categories.map(([name, n]) => (
        <div key={name} className={row}>
          <span>{name}</span>
          <span className="text-[#6b7280]">{n}</span>
        </div>
      ))}
    </aside>
  );
}

export default function App() {
  return (
    <div dir="rtl" className="relative flex h-[976px] w-[1912px] flex-col overflow-hidden bg-white font-['Noto_Sans','Noto_Sans_Arabic','DejaVu_Sans',sans-serif]">
      <BrowserBar />
      <Header />
      <div className="flex min-h-0 flex-1">
        <Sidebar />
        <main className="flex min-w-0 flex-1 overflow-hidden bg-[#f8f9fa]">
          <div className="mt-[8.600px] mr-[10px] ml-auto grid h-[896px] w-[1737px] shrink-0 grid-cols-7 grid-rows-[63.330px_74px_74px_63.330px_74px_74px_74px_74px_74px_67.330px_63.330px] gap-x-[10.670px] gap-y-[5.330px]">
            {apps.map((app, i) => (
              <AppCard key={i} app={app} first={i === 0} />
            ))}
          </div>
          <div className="flex w-[5px] shrink-0 flex-col bg-[#fcfcfc]">
            <svg viewBox="0 0 5 7" className="mt-[6px] h-[7px] w-[5px]"><path d="M0 0l5 7H0z" fill="#8b8b8b" /></svg>
            <div className="mt-[6px] h-[798px] rounded-tr-[3px] bg-[#8b8b8b]" />
            <svg viewBox="0 0 5 7" className="mt-[13px] h-[7px] w-[5px]"><path d="M0 0h5L0 7z" fill="#8b8b8b" /></svg>
          </div>
        </main>
      </div>
      <div className="pointer-events-none absolute top-[882px] left-[85px] w-[240px] text-black/30">
        <div className="text-[19.500px] leading-[28px] whitespace-nowrap">تنشيط Windows</div>
        <div className="text-[15.300px] leading-[18px] whitespace-nowrap">انتقل إلى الإعدادت لتنشيط Windows.</div>
      </div>
    </div>
  );
}
